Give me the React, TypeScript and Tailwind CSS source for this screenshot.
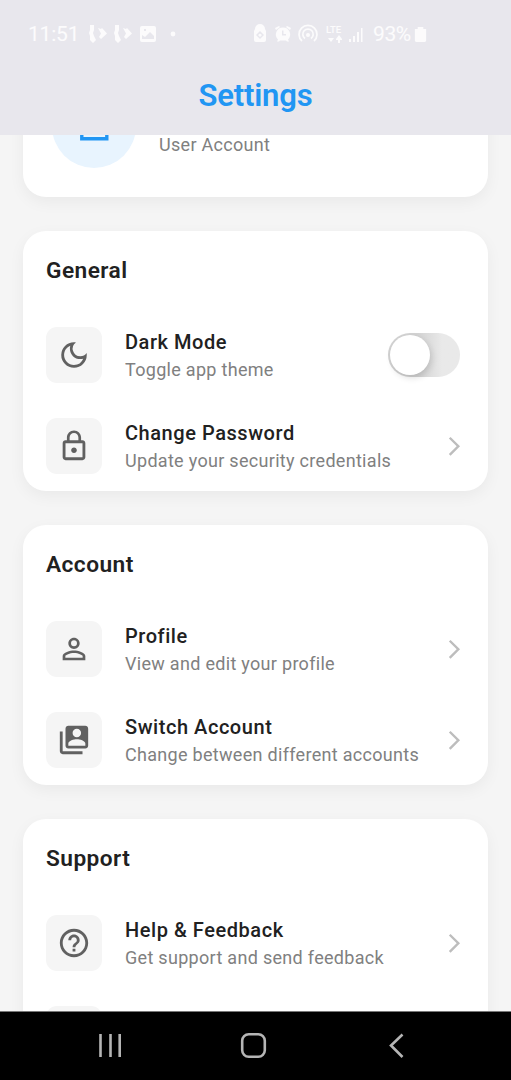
import React from 'react';
import type { IconType } from 'react-icons';
import {
  MdArrowForwardIos,
  MdHelpOutline,
  MdLockOutline,
  MdOutlineDarkMode,
  MdPersonOutline,
  MdSwitchAccount,
} from 'react-icons/md';

interface SettingItem {
  title?: string;
  subtitle?: string;
  icon?: IconType;
  toggle?: boolean;
}

interface SettingSection {
  heading: string;
  items: SettingItem[];
}

const sections: SettingSection[] = [
  {
    heading: 'General',
    items: [
      { title: 'Dark Mode', subtitle: 'Toggle app theme', icon: MdOutlineDarkMode, toggle: true },
      { title: 'Change Password', subtitle: 'Update your security credentials', icon: MdLockOutline },
    ],
  },
  {
    heading: 'Account',
    items: [
      { title: 'Profile', subtitle: 'View and edit your profile', icon: MdPersonOutline },
      { title: 'Switch Account', subtitle: 'Change between different accounts', icon: MdSwitchAccount },
    ],
  },
  {
    heading: 'Support',
    items: [
      { title: 'Help & Feedback', subtitle: 'Get support and send feedback', icon: MdHelpOutline },
      {},
    ],
  },
];

const StatusBar: React.FC = () => (
  <div className="flex h-[68px] items-center pl-7 text-[21px] leading-none tracking-[-0.2px] text-white/85">
    <span className="w-[60px] shrink-0">11:51</span>

    {/* Notifications */}
    <svg className="shrink-0" width="92" height="20" viewBox="0 0 92 20" fill="currentColor">
      <path d="M2 1h4v5l-1 3 1 3 2 4-3 3-3-3V12l-1-3 1-3zM10 4l3 1 1-1 5 5.500-6 5.500-2-2 2-3.500z" />
      <path d="M27 1h4v5l-1 3 1 3 2 4-3 3-3-3V12l-1-3 1-3zM35 4l3 1 1-1 5 5.500-6 5.500-2-2 2-3.500z" />
      <path
        fillRule="evenodd"
        d="M54 2h12a2 2 0 0 1 2 2v12a2 2 0 0 1-2 2H54a2 2 0 0 1-2-2V4a2 2 0 0 1 2-2zm0 13h12v-3l-4-4-5 5-3-2zm2-10v2h2V5z"
      />
      <circle cx="85" cy="10" r="2.4" />
    </svg>

    {/* System indicators */}
    <svg className="ml-[73px] shrink-0" width="112" height="20" viewBox="0 0 112 20" fill="currentColor">
      <path
        fillRule="evenodd"
        d="M2 5a5 5 0 0 1 10 0l1 2v9a2 2 0 0 1-2 2H3a2 2 0 0 1-2-2V7zm5 2-4 4 4 4 4-4zm0 2.500 2 1.500-2 2-2-2z"
      />
      <path
        fillRule="evenodd"
        d="M22 4l4-2 1 1-4 3zM38 4l-4-2-1 1 4 3zM30 3.500a7 7 0 0 1 5 12l1 2h-2l-1-1h-6l-1 1h-2l1-2a7 7 0 0 1 5-12zm-1 3v5h4v-1.500h-2.500v-3.500z"
      />
      <g fill="none" stroke="currentColor" strokeWidth="1.7">
        <path d="M49 17a9 9 0 1 1 12 0M52 14.500a5.200 5.200 0 1 1 6 0" />
      </g>
      <circle cx="55" cy="11" r="2" />
      <text x="73" y="8.500" fontSize="9.500" fontWeight="500" letterSpacing="0">LTE</text>
      <path d="M75 14l3 4 3-4zM83 15l3-4 3 4v1h-2v3h-2v-3h-2z" />
      <path d="M96 15h2v3h-2zM100 12h2v6h-2zM104 8h2v10h-2zM108 4h1.500v14H108z" />
    </svg>
    <span className="ml-[8px] w-[41px] shrink-0 tracking-[-0.4px]">93%</span>
    <svg className="shrink-0" width="13" height="15" viewBox="0 0 12 16" fill="currentColor">
      <path d="M3 0h6v2h3v12.500a1.500 1.500 0 0 1-1.500 1.500h-9A1.500 1.500 0 0 1 0 14.500V2h3z" />
    </svg>
  </div>
);

const ToggleSwitch: React.FC = () => (
  <div className="mr-[5px] flex h-11 w-[72px] items-center rounded-full bg-[#e9e9e9] bg-linear-to-r from-[#d2d2d2] from-40% to-[#e9e9e9] to-75% px-[1.5px]">
    <div className="size-[40px] rounded-full bg-white shadow-[2px_3px_6px_rgba(0,0,0,0.13)]" />
  </div>
);

const SettingRow: React.FC<{ item: SettingItem }> = ({ item }) => {
  const Icon = item.icon;

  return (
    <div className="flex h-[91px] items-center px-[23px]">
      <div className="flex size-14 shrink-0 items-center justify-center rounded-[11px] bg-[#f5f5f5] text-[#616161]">
        {Icon && <Icon size={34} />}
      </div>
      <div className="ml-[23px] flex-1 pt-[3px] whitespace-nowrap">
        <div className="text-[20px] leading-7 font-medium tracking-[0.55px] text-[#212121]">{item.title}</div>
        <div className="text-[18px] leading-7 tracking-[0.3px] text-[#808080]">{item.subtitle}</div>
      </div>
      {item.toggle && <ToggleSwitch />}
      {item.title && !item.toggle && <MdArrowForwardIos size={22.7} className="-mr-px text-[#bdbdbd]" />}
    </div>
  );
};

const SectionCard: React.FC<{ section: SettingSection }> = ({ section }) => (
  <section className="rounded-[23px] bg-white shadow-[0_5px_16px_rgba(0,0,0,0.05)]">
    <h2 className="flex h-[78px] items-center px-[23px] pt-px text-[22.700px] font-semibold tracking-[0.45px] text-[#212121]">
      {section.heading}
    </h2>
    {section.items.map((item, index) => (
      <SettingRow key={index} item={item} />
    ))}
  </section>
);

const App: React.FC = () => (
  <div className="flex h-[1080px] w-[511px] flex-col overflow-hidden bg-[#f5f5f5] font-['Roboto',sans-serif]">
    <header className="h-[135px] shrink-0 bg-[#e8e7ed]">
      <StatusBar />
      <h1 className="pt-[7px] text-center text-[31px] leading-[42px] font-semibold tracking-[-0.2px] text-[#2196f3]">
        Settings
      </h1>
    </header>

    <main className="flex min-h-0 flex-1 flex-col gap-[34px] overflow-hidden px-[23px] pt-[0.4px]">
      {/* User card, partly scrolled under the header */}
      <section className="-mt-[81px] flex h-[143px] shrink-0 items-end rounded-[23px] bg-white px-[29px] pb-[29px] shadow-[0_5px_16px_rgba(0,0,0,0.05)]">
        <div className="flex size-[84px] items-center justify-center rounded-full bg-[#e8f4fe] text-[#2196f3]">
          <MdPersonOutline size={42.6} />
        </div>
        <div className="mb-[15px] ml-[23px] text-[18px] leading-4 tracking-[0.3px] text-[#808080]">User Account</div>
      </section>

      {sections.map((section) => (
        <SectionCard key={section.heading} section={section} />
      ))}
    </main>

    <nav className="flex h-[69px] shrink-0 items-center border-t border-[#777] bg-black text-[#b5b5b5]">
      <svg width="511" height="68" viewBox="0 0 511 68" fill="none" stroke="currentColor" strokeWidth="2.600">
        <path d="M100.500 22v23M110.500 22v23M119.700 22v23" />
        <rect x="242.200" y="22.200" width="22.600" height="22.600" rx="6.500" />
        <path d="M402.500 22.500L391 33.500l11.500 11.500" />
      </svg>
    </nav>
  </div>
);

export default App;
